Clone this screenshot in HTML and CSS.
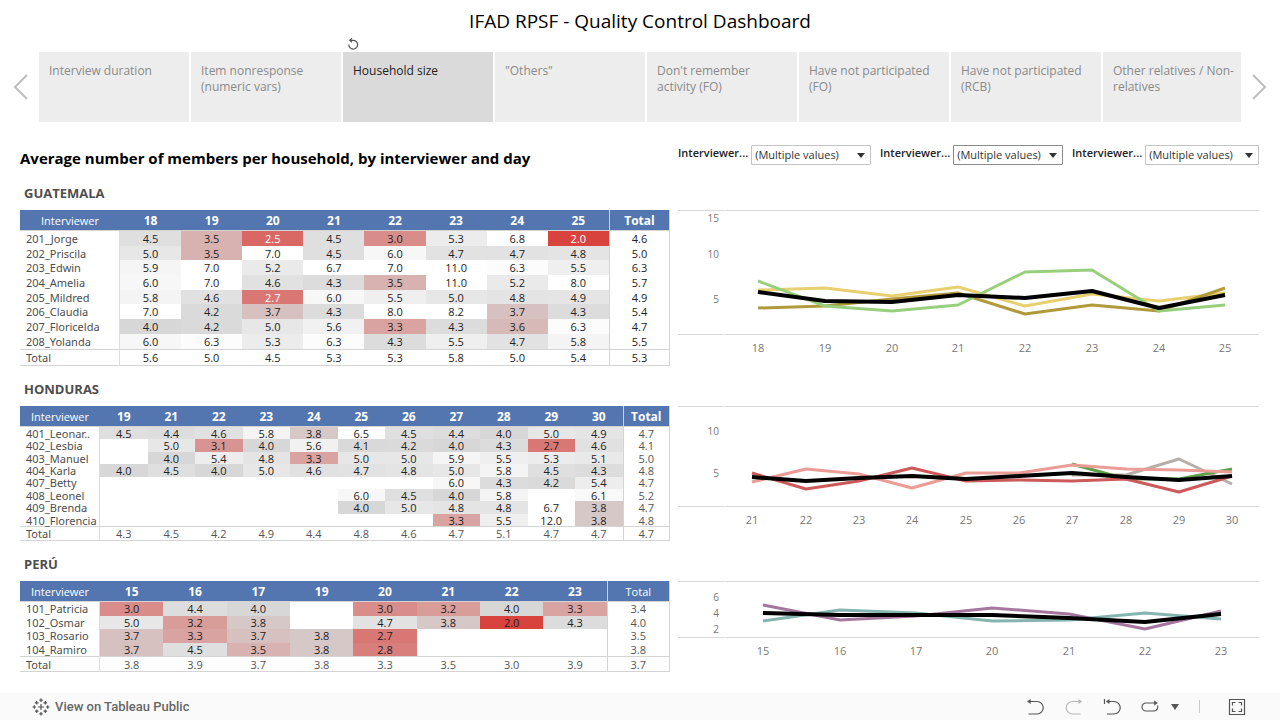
FILE: index.html
```html
<!DOCTYPE html>
<html lang="en">
<head>
<meta charset="utf-8">
<title>IFAD RPSF - Quality Control Dashboard</title>
<link rel="stylesheet" href="styles.css">
</head>
<body>
<h1 class="page-title">IFAD RPSF - Quality Control Dashboard</h1>

<nav class="story" aria-label="Story points">
  <button class="story-arrow" type="button" aria-label="Previous"><svg viewBox="0 0 16 28" width="16" height="28"><path d="M15 2 3 14l12 12"/></svg></button>
  <div class="story-points">
    <button class="point" type="button">Interview duration</button>
    <button class="point" type="button">Item nonresponse (numeric vars)</button>
    <div class="point-wrap">
      <button class="point point-active" type="button">Household size</button>
      <button class="revert" type="button" aria-label="Revert"><svg viewBox="0 0 12 12" width="12" height="12"><path d="M3 2.300H6.200A4.400 4.400 0 1 1 1.800 6.500M5 .4 2.800 2.300 5 4.200"/></svg></button>
    </div>
    <button class="point" type="button">"Others"</button>
    <button class="point" type="button">Don't remember activity (FO)</button>
    <button class="point" type="button">Have not participated (FO)</button>
    <button class="point" type="button">Have not participated (RCB)</button>
    <button class="point" type="button">Other relatives / Non-relatives</button>
  </div>
  <button class="story-arrow" type="button" aria-label="Next"><svg viewBox="0 0 16 28" width="16" height="28"><path d="m1 2 12 12L1 26"/></svg></button>
</nav>

<main class="board">
  <div class="board-row board-head">
    <h2 class="board-title">Average number of members per household, by interviewer and day</h2>
    <div class="filters">
      <div class="filter filter-wide"><label for="f1">Interviewer...</label><span class="picker"><select id="f1"><option>(Multiple values)</option></select></span></div>
      <div class="filter filter-focus"><label for="f2">Interviewer...</label><span class="picker"><select id="f2"><option>(Multiple values)</option></select></span></div>
      <div class="filter"><label for="f3">Interviewer...</label><span class="picker"><select id="f3"><option>(Multiple values)</option></select></span></div>
    </div>
  </div>

  <section class="country">
    <h3>GUATEMALA</h3>
    <div class="board-row">
      <table class="heat heat-gt" id="table-gt"></table>
      <svg class="chart" id="chart-gt" viewBox="0 0 581 155" role="img" aria-label="Guatemala daily average"></svg>
    </div>
  </section>
  <section class="country">
    <h3>HONDURAS</h3>
    <div class="board-row">
      <table class="heat heat-hn" id="table-hn"></table>
      <svg class="chart" id="chart-hn" viewBox="0 0 581 135" role="img" aria-label="Honduras daily average"></svg>
    </div>
  </section>
  <section class="country">
    <h3>PERÚ</h3>
    <div class="board-row">
      <table class="heat heat-pe" id="table-pe"></table>
      <svg class="chart" id="chart-pe" viewBox="0 0 581 91" role="img" aria-label="Perú daily average"></svg>
    </div>
  </section>
</main>

<footer class="toolbar">
  <a class="brand" href="#">
    <svg viewBox="0 0 18 18" width="18" height="18"><path d="M9 6v6M6 9h6M9 .5v3.500M7.300 2.200h3.400M9 14v3.500M7.300 15.800h3.400M2.300 7.300v3.400M.5 9H4M15.700 7.300v3.400M14 9h3.500M4.700 3v3.600M2.900 4.800h3.600M13.300 3v3.600M11.500 4.800h3.600M4.700 11.400V15M2.900 13.200h3.600M13.300 11.400V15M11.500 13.200h3.600"/></svg>
    <span>View on Tableau Public</span>
  </a>
  <div class="tools">
    <button type="button" aria-label="Undo"><svg viewBox="0 0 18 18" width="18" height="18"><path d="M2 3.500h8a6.200 6.200 0 0 1 0 12.500H1.500"/><path class="solid" d="M0 3.500 3.700 1v5z"/></svg></button>
    <button class="tool-off" type="button" aria-label="Redo" disabled><svg viewBox="0 0 18 18" width="18" height="18"><path d="M16 3.500H7.500a6.200 6.200 0 0 0 0 12.500h8"/><path class="solid" d="M17.200 3.500 13.500 1v5z"/></svg></button>
    <button type="button" aria-label="Replay"><svg viewBox="0 0 18 18" width="18" height="18"><path d="M1.500 1v5M4 3.500h7a6.200 6.200 0 0 1 0 12.500H4"/><path class="solid" d="M2.800 3.500 6.500 1v5z"/></svg></button>
    <button class="tool-menu" type="button" aria-label="Refresh"><svg viewBox="0 0 18 18" width="18" height="18"><path d="M14 5H5a4 4 0 0 0 0 8h8a4 4 0 0 0 3.500-5.500"/><path class="solid" d="M16.800 5 13.200 2.500v5z"/></svg><svg viewBox="0 0 8 6" width="8" height="6"><path class="solid" d="M0 0h8L4 6z"/></svg></button>
    <span class="divider"></span>
    <button type="button" aria-label="Full screen"><svg viewBox="0 0 18 18" width="18" height="18"><path d="M1.500 1.500h15v15h-15zM4.500 7.500v-3h3M10.500 4.500h3v3M13.500 10.500v3h-3M7.500 13.500h-3v-3"/></svg></button>
  </div>
</footer>
<script src="app.js"></script>
</body>
</html>
```

FILE: styles.css
```css
* { box-sizing: border-box; }

body {
  margin: 0;
  min-height: 100vh;
  display: flex;
  flex-direction: column;
  background: #fff;
  color: #333;
  font: 11px/15px "Open Sans", "Noto Sans", sans-serif;
}

button, select { font: inherit; color: inherit; }
button { border: 0; padding: 0; background: none; }
h1, h2, h3 { margin: 0; }

.page-title {
  padding: 6px 0 16px;
  font-size: 19px;
  line-height: 30px;
  font-weight: 400;
  text-align: center;
  color: #000;
}

.story { display: flex; align-items: stretch; padding: 0 1px; }
.story-arrow { flex: 0 0 38px; display: grid; place-items: center; }
.story-arrow svg { fill: none; stroke: #bdbdbd; stroke-width: 2; }
.story-points {
  flex: 1;
  display: grid;
  grid-template-columns: repeat(7, 150fr) 138fr;
  gap: 2px;
  min-width: 0;
}
.point {
  min-width: 0;
  min-height: 70px;
  padding: 11px 6px 11px 10px;
  display: flex;
  align-items: flex-start;
  text-align: left;
  font-size: 12px;
  line-height: 16px;
  background: #ededed;
  color: #8a8a8a;
}
.point-wrap { position: relative; display: grid; }
.point-active { background: #dadada; color: #222; }
.revert { position: absolute; left: 4px; top: -14px; height: 12px; }
.revert svg { display: block; fill: none; stroke: #555; stroke-width: 1.2; }

.board { padding: 22px 21px 0 20px; }
.board-row { display: grid; grid-template-columns: 650fr 581fr; gap: 8px; align-items: start; }
.board-head { margin-bottom: 9px; }
.board-title { font-size: 15px; line-height: 28px; font-weight: 700; color: #000; white-space: nowrap; }

.filters { display: flex; gap: 9px; padding-top: 1px; }
.filter { flex: 187 1 0; display: flex; gap: 3px; min-width: 0; }
.filter-focus { flex-grow: 183; }
.filter-wide { flex-grow: 193; }
.filter label { flex: 0 0 70px; font-weight: 600; line-height: 16px; white-space: nowrap; color: #222; }
.picker { position: relative; flex: 1; min-width: 0; }
.picker::after {
  content: "";
  position: absolute;
  right: 6px;
  top: 8px;
  border: 4px solid transparent;
  border-top: 5px solid #333;
  border-bottom: 0;
  pointer-events: none;
}
.picker select {
  appearance: none;
  display: block;
  width: 100%;
  height: 20px;
  padding: 0 3px 1px;
  border: 1px solid #c4c4c4;
  border-radius: 1px;
  background: #fff;
}
.filter-focus select { border-color: #8a8a8a; }

.country { margin-bottom: 11px; }
.country h3 { padding: 5px 4px 9px; font-size: 13px; line-height: 15px; font-weight: 700; color: #4e4e4e; }

.heat {
  width: 100%;
  table-layout: fixed;
  border-collapse: separate;
  border-spacing: 0;
  text-align: center;
  line-height: 11px;
}
.heat-gt { height: 156px; }
.heat-hn { height: 135px; }
.heat-pe { height: 91px; }
.heat-gt .name-col { width: 100px; }
.heat-hn .name-col, .heat-pe .name-col { width: 80px; }
.heat th, .heat td { padding: 0; }
.heat thead th { height: 21px; background: #5476b0; color: #fff; font-size: 12px; font-weight: 700; border-bottom: 1px solid #d4d4d4; }
.heat thead th:first-child, .heat-pe thead th:last-child { font-size: 11px; font-weight: 400; }
.heat tbody th { padding-left: 6px; text-align: left; font-family: "Noto Sans", sans-serif; font-weight: 400; color: #4e4e4e; white-space: nowrap; border-right: 1px solid #dcdcdc; }
.heat tr > :last-child { border-left: 1px solid #d4d4d4; border-right: 1px solid #d4d4d4; }
.heat .sum > * { border-top: 1px solid #d4d4d4; border-bottom: 1px solid #d4d4d4; }
.heat td { color: #222; }
.heat .light { color: #fff; }
.heat-hn .sum td, .heat-pe .sum td, .heat-hn td:last-child, .heat-pe td:last-child { color: #555; }

.chart { display: block; width: 100%; height: auto; font-size: 11px; }
.chart text { fill: #777; text-anchor: middle; dominant-baseline: central; }
.chart .tick { text-anchor: end; font-size: 10px; }
.chart line { stroke: #d9d9d9; }
.chart polyline { fill: none; stroke-width: 3; stroke-linejoin: round; }
.line-yellow { stroke: #e8cf6f; }
.line-olive { stroke: #b09a3c; }
.line-green { stroke: #98cf7c; }
.line-forest { stroke: #5f9f4a; }
.line-gray { stroke: #b5afac; }
.line-red { stroke: #cc5a5a; }
.line-pink { stroke: #eb9c97; }
.line-teal { stroke: #86b5b0; }
.line-purple { stroke: #a5779f; }
.chart .line-total { stroke: #000; stroke-width: 4; }

.toolbar {
  margin-top: auto;
  min-height: 27px;
  padding: 0 34px 0 32px;
  display: flex;
  align-items: center;
  justify-content: space-between;
  background: #fafafa;
  color: #666;
}
.toolbar svg { display: block; fill: none; stroke: #555; stroke-width: 1.2; }
.toolbar .solid { fill: #555; stroke: none; }
.brand { display: flex; align-items: center; gap: 5px; color: #666; text-decoration: none; font: 500 13px/18px Roboto, sans-serif; }
.tools { display: flex; align-items: center; gap: 20px; }
.tool-off { opacity: .4; }
.tool-menu { display: flex; align-items: center; gap: 12px; }
.divider { width: 1px; height: 13px; margin-right: 8px; background: #ccc; }
```

FILE: app.js
```js
const countries = [
  {
    id: "gt",
    days: [18, 19, 20, 21, 22, 23, 24, 25],
    rows: [
      ["201_Jorge", "4.5 3.5 2.5 4.5 3.0 5.3 6.8 2.0 4.6"],
      ["202_Priscila", "5.0 3.5 7.0 4.5 6.0 4.7 4.7 4.8 5.0"],
      ["203_Edwin", "5.9 7.0 5.2 6.7 7.0 11.0 6.3 5.5 6.3"],
      ["204_Amelia", "6.0 7.0 4.6 4.3 3.5 11.0 5.2 8.0 5.7"],
      ["205_Mildred", "5.8 4.6 2.7 6.0 5.5 5.0 4.8 4.9 4.9"],
      ["206_Claudia", "7.0 4.2 3.7 4.3 8.0 8.2 3.7 4.3 5.4"],
      ["207_Floricelda", "4.0 4.2 5.0 5.6 3.3 4.3 3.6 6.3 4.7"],
      ["208_Yolanda", "6.0 6.3 5.3 6.3 4.3 5.5 4.7 5.8 5.5"],
      ["Total", "5.6 5.0 4.5 5.3 5.3 5.8 5.0 5.4 5.3"]
    ],
    lightBelow: 2.8,
    bottom: 124,
    ticks: [[15, 8], [10, 44], [5, 89]],
    labels: [18, 19, 20, 21, 22, 23, 24, 25],
    labelY: 137,
    xs: [80, 147, 214, 280, 347, 414, 481, 547],
    lines: {
      yellow: [80, 78, 86, 77, 96, 84, 91, 83],
      olive: [98, 96, 89, 83, 104, 95, 101, 78],
      green: [71, 96, 101, 95, 62, 60, 101, 95],
      total: [82, 91, 92, 85, 88, 81, 98, 85]
    }
  },
  {
    id: "hn",
    days: [19, 21, 22, 23, 24, 25, 26, 27, 28, 29, 30],
    rows: [
      ["401_Leonar..", "4.5 4.4 4.6 5.8 3.8 6.5 4.5 4.4 4.0 5.0 4.9 4.7"],
      ["402_Lesbia", "- 5.0 3.1 4.0 5.6 4.1 4.2 4.0 4.3 2.7 4.6 4.1"],
      ["403_Manuel", "- 4.0 5.4 4.8 3.3 5.0 5.0 5.9 5.5 5.3 5.1 5.0"],
      ["404_Karla", "4.0 4.5 4.0 5.0 4.6 4.7 4.8 5.0 5.8 4.5 4.3 4.8"],
      ["407_Betty", "- - - - - - - 6.0 4.3 4.2 5.4 4.7"],
      ["408_Leonel", "- - - - - 6.0 4.5 4.0 5.8 - 6.1 5.2"],
      ["409_Brenda", "- - - - - 4.0 5.0 4.8 4.8 6.7 3.8 4.7"],
      ["410_Florencia", "- - - - - - - 3.3 5.5 12.0 3.8 4.8"],
      ["Total", "4.3 4.5 4.2 4.9 4.4 4.8 4.6 4.7 5.1 4.7 4.7 4.7"]
    ],
    lightBelow: 0,
    bottom: 100,
    ticks: [[10, 25], [5, 67]],
    labels: [21, 22, 23, 24, 25, 26, 27, 28, 29, 30],
    labelY: 113,
    xs: [74, 128, 181, 234, 288, 341, 394, 448, 501, 554],
    lines: {
      gray: [null, null, null, null, null, null, 69, 69, 53, 78],
      forest: [null, null, null, null, null, null, 58, 73, 73, 63],
      red: [67, 83, 75, 62, 75, 74, 75, 73, 86, 70],
      pink: [76, 63, 68, 82, 67, 67, 59, 63, 64, 66],
      total: [71, 75, 72, 70, 73, 70, 67, 71, 74, 70]
    }
  },
  {
    id: "pe",
    days: [15, 16, 17, 19, 20, 21, 22, 23],
    rows: [
      ["101_Patricia", "3.0 4.4 4.0 - 3.0 3.2 4.0 3.3 3.4"],
      ["102_Osmar", "5.0 3.2 3.8 - 4.7 3.8 2.0 4.3 4.0"],
      ["103_Rosario", "3.7 3.3 3.7 3.8 2.7 - - - 3.5"],
      ["104_Ramiro", "3.7 4.5 3.5 3.8 2.8 - - - 3.8"],
      ["Total", "3.8 3.9 3.7 3.8 3.3 3.5 3.0 3.9 3.7"]
    ],
    lightBelow: 0,
    bottom: 56,
    ticks: [[6, 16], [4, 32], [2, 48]],
    labels: [15, 16, 17, 20, 21, 22, 23],
    labelY: 69,
    xs: [85, 162, 238, 314, 391, 467, 543],
    lines: {
      teal: [40, 29, 32, 40, 39, 32, 38],
      purple: [24, 39, 35, 27, 33, 48, 30],
      total: [32, 34, 34, 34, 37, 41, 33]
    }
  }
];

// Red below 4, gray at 4, fading to white at 6.5.
function shade(value) {
  const from = value < 4 ? [217, 67, 61] : [215, 215, 215];
  const to = value < 4 ? [215, 215, 215] : [255, 255, 255];
  const t = value < 4 ? (value - 2) / 2 : Math.min(1, (value - 4) / 2.5);
  return `rgb(${from.map((c, i) => Math.round(c + (to[i] - c) * t)).join(",")})`;
}

function tableHtml({ days, rows, lightBelow }) {
  const head = ["Interviewer", ...days, "Total"]
    .map((h, i) => `<th scope="col"${i ? "" : ' class="name-col"'}>${h}</th>`).join("");
  const body = rows.map(([name, text]) => {
    const sum = name === "Total";
    const values = text.split(" ");
    const cells = values.map((v, i) => {
      if (v === "-") return "<td></td>";
      if (sum || i === values.length - 1) return `<td>${v}</td>`;
      const cls = +v < lightBelow ? ' class="light"' : "";
      return `<td${cls} style="background:${shade(+v)}">${v}</td>`;
    }).join("");
    return `<tr${sum ? ' class="sum"' : ""}><th scope="row">${name}</th>${cells}</tr>`;
  }).join("");
  return `<thead><tr>${head}</tr></thead><tbody>${body}</tbody>`;
}

function chartSvg({ bottom, ticks, labels, labelY, xs, lines }) {
  const rules = [0.5, bottom + 0.5].map(y =>
    `<line x1="0" x2="46" y1="${y}" y2="${y}"/><line x1="47" x2="581" y1="${y}" y2="${y}"/>`).join("");
  const marks = ticks.map(([t, y]) => `<text class="tick" x="41" y="${y}">${t}</text>`).join("");
  const days = labels.map((d, i) => `<text x="${xs[i]}" y="${labelY}">${d}</text>`).join("");
  const paths = Object.entries(lines).map(([name, ys]) => {
    const points = ys.map((y, i) => y === null ? "" : `${xs[i]},${y}`).filter(Boolean).join(" ");
    return `<polyline class="line-${name}" points="${points}"/>`;
  }).join("");
  return rules + marks + days + paths;
}

for (const country of countries) {
  document.getElementById(`table-${country.id}`).innerHTML = tableHtml(country);
  document.getElementById(`chart-${country.id}`).innerHTML = chartSvg(country);
}
```
